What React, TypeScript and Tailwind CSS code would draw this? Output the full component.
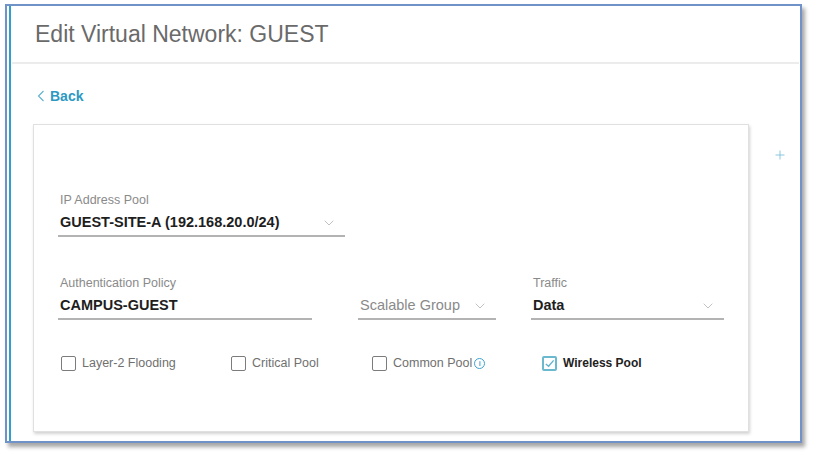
import { ChevronDown, Plus } from "lucide-react"

function Field({ label, value, width, muted, chevron = true }: { label?: string; value: string; width: string; muted?: boolean; chevron?: boolean }) {
  return (
    <div className={width}>
      <div className="h-[14px] text-[12.5px] leading-[14px] text-[#8a8a8a] px-[2px]">{label}</div>
      <div className="mt-[3px] h-[27px] flex items-center justify-between px-[2px] border-b-2 border-[#b3b3b3]">
        <span className={muted ? "text-[14.5px] text-[#8a8a8a]" : "text-[14.5px] font-bold text-[#1e1e1e]"}>{value}</span>
        {chevron && <ChevronDown className="w-4 h-4 text-[#b5b5b5] mr-[6px]" strokeWidth={1.25} />}
      </div>
    </div>
  )
}

function Check({ label, checked, width, info }: { label: string; checked?: boolean; width: string; info?: boolean }) {
  return (
    <div className={`${width} flex items-center gap-[6px]`}>
      <div
        className={
          checked
            ? "w-[15px] h-[15px] rounded-[2px] border-2 border-[#6bb9cf] flex items-center justify-center"
            : "w-[15px] h-[15px] rounded-[2px] border-[1.5px] border-[#7c7c7c]"
        }
      >
        {checked && (
          <svg viewBox="0 0 12 12" className="w-[11px] h-[11px]">
            <path d="M2 6.5 L5 9 L10.5 2.5" fill="none" stroke="#5fb2cb" strokeWidth="1.4" />
          </svg>
        )}
      </div>
      <span className={checked ? "text-[12px] font-bold text-[#222]" : "text-[12.5px] text-[#707070]"}>{label}</span>
      {info && (
        <span className="ml-[-4px] w-[11px] h-[11px] rounded-full border-[1.5px] border-[#3da3cf] flex items-center justify-center text-[7px] font-bold leading-none text-[#3da3cf]">
          i
        </span>
      )}
    </div>
  )
}

export default function App() {
  return (
    <div className="w-[816px] h-[456px] bg-white pt-[4px] pl-[5px]" style={{ fontFamily: "'Liberation Sans', Arial, sans-serif" }}>
      <div className="w-[797px] h-[439px] border-2 border-[#6f93c9] shadow-[3px_4px_4px_rgba(0,0,0,0.35)]">
        <div className="h-full ml-[2px] border-l-2 border-[#2f9fcb] flex flex-col">
          <div className="h-[56px] flex items-center pl-[24px]">
            <h1 className="text-[23px] text-[#6a6a6a]">Edit Virtual Network: GUEST</h1>
          </div>
          <div className="h-[2px] bg-[#ececec] mx-[1px]" />
          <div className="pl-[26px] mt-[22px] flex items-center gap-[5px] text-[#2d99c3]">
            <svg viewBox="0 0 8 12" className="w-[8px] h-[12px]">
              <path d="M6.5 1 L1.5 6 L6.5 11" fill="none" stroke="#5fb0d0" strokeWidth="1.1" />
            </svg>
            <span className="text-[14px] font-bold leading-[20px]">Back</span>
          </div>
          <div className="mt-[18px] flex items-start">
            <div className="ml-[22px] w-[716px] h-[308px] border border-[#e0e0e0] shadow-[1px_2px_3px_rgba(0,0,0,0.18)] pt-[68px] pl-[24px]">
              <Field label="IP Address Pool" value="GUEST-SITE-A (192.168.20.0/24)" width="w-[287px]" />
              <div className="mt-[39px] flex">
                <Field label="Authentication Policy" value="CAMPUS-GUEST" width="w-[254px]" chevron={false} />
                <div className="ml-[46px]">
                  <Field value="Scalable Group" width="w-[138px]" muted />
                </div>
                <div className="ml-[35px]">
                  <Field label="Traffic" value="Data" width="w-[193px]" />
                </div>
              </div>
              <div className="mt-[34px] pl-[3px] flex items-center">
                <Check label="Layer-2 Flooding" width="w-[170px]" />
                <Check label="Critical Pool" width="w-[141px]" />
                <Check label="Common Pool" width="w-[170px]" info />
                <Check label="Wireless Pool" checked width="w-[150px]" />
              </div>
            </div>
            <Plus className="ml-[24px] mt-[24px] w-[14px] h-[14px] text-[#7bbfdb]" strokeWidth={1.5} />
          </div>
        </div>
      </div>
    </div>
  )
}
